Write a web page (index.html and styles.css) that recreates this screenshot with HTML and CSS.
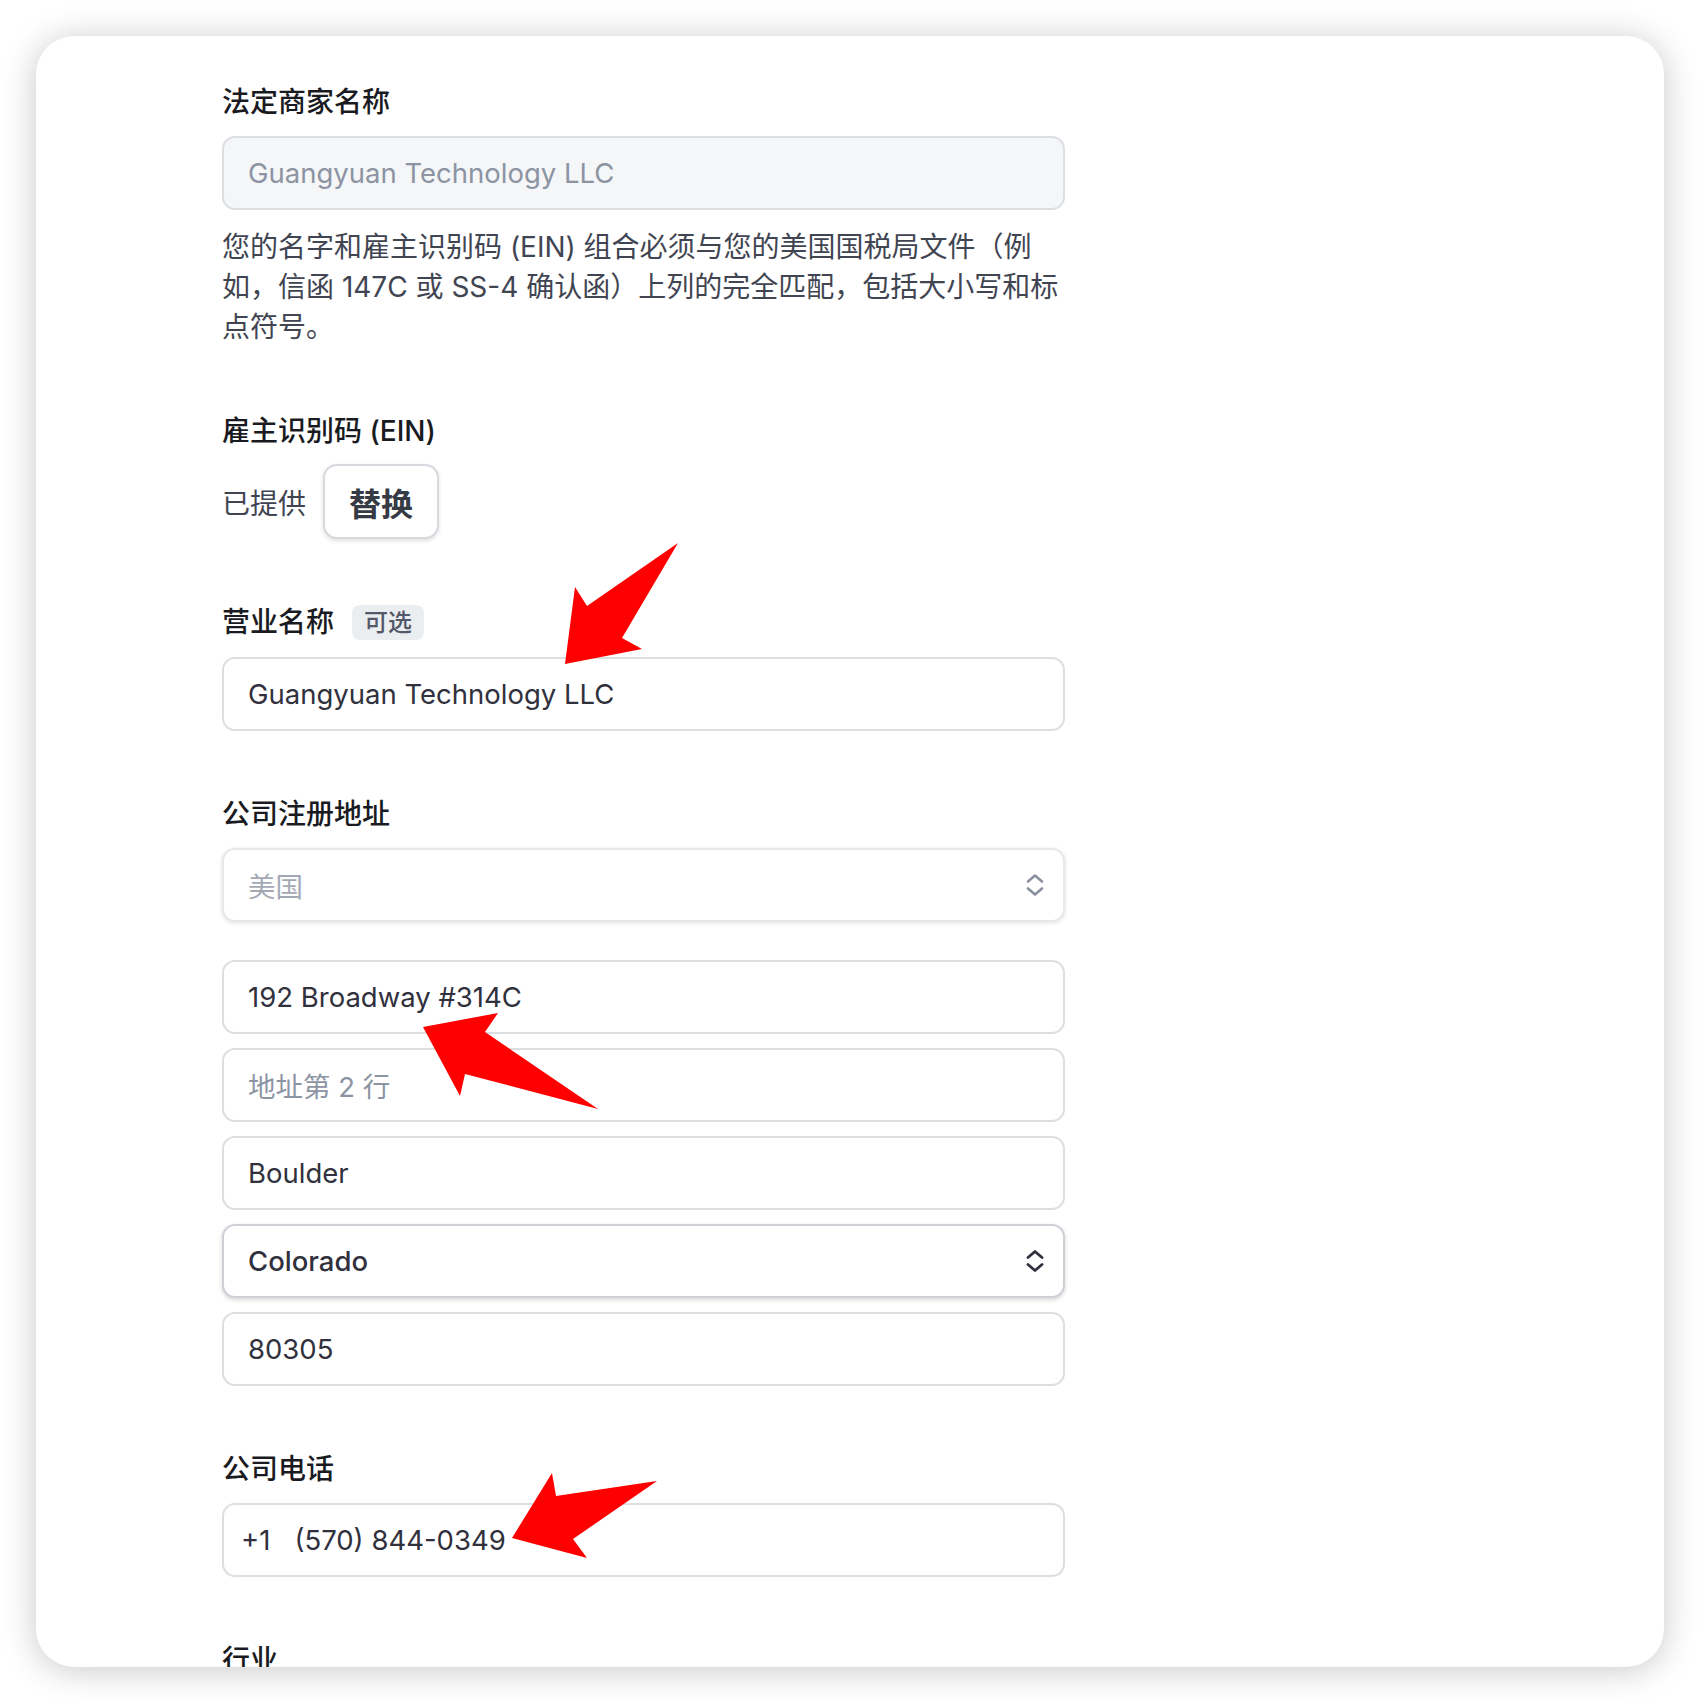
FILE: index.html
```html
<!DOCTYPE html>
<html lang="zh-CN">
<head>
<meta charset="utf-8">
<title>商家信息</title>
<link rel="stylesheet" href="styles.css">
</head>
<body>
<div class="card">
  <div class="form">
    <section class="section">
      <div class="label">法定商家名称</div>
      <div class="input disabled"><span class="placeholder">Guangyuan Technology LLC</span></div>
      <p class="help">您的名字和雇主识别码 (EIN) 组合必须与您的美国国税局文件（例如，信函 147C 或 SS-4 确认函）上列的完全匹配，包括大小写和标点符号。</p>
    </section>

    <section class="section">
      <div class="label label-tight">雇主识别码 (EIN)</div>
      <div class="provided-row">
        <span class="provided">已提供</span>
        <button class="btn" type="button">替换</button>
      </div>
    </section>

    <section class="section">
      <div class="label-row">
        <span class="label">营业名称</span>
        <span class="badge">可选</span>
      </div>
      <div class="input"><span class="value">Guangyuan Technology LLC</span></div>
    </section>

    <section class="section">
      <div class="label">公司注册地址</div>
      <div class="select select-disabled">
        <span class="muted">美国</span>
        <svg class="chev" width="18" height="26" viewBox="0 0 18 26"><path d="M2 9.5 L9 3.5 L16 9.5 M2 16.5 L9 22.5 L16 16.5" fill="none" stroke="#8a919e" stroke-width="2.6" stroke-linecap="round" stroke-linejoin="round"/></svg>
      </div>
      <div class="address">
        <div class="input"><span class="value">192 Broadway #314C</span></div>
        <div class="input"><span class="placeholder">地址第 2 行</span></div>
        <div class="input"><span class="value">Boulder</span></div>
        <div class="select select-active">
          <span class="value strong">Colorado</span>
          <svg class="chev" width="18" height="26" viewBox="0 0 18 26"><path d="M2 9.5 L9 3.5 L16 9.5 M2 16.5 L9 22.5 L16 16.5" fill="none" stroke="#30313d" stroke-width="2.8" stroke-linecap="round" stroke-linejoin="round"/></svg>
        </div>
        <div class="input"><span class="value">80305</span></div>
      </div>
    </section>

    <section class="section">
      <div class="label">公司电话</div>
      <div class="input phone"><span class="value code">+1</span><span class="value">(570) 844-0349</span></div>
    </section>

    <section class="section">
      <div class="label">行业</div>
    </section>
  </div>
</div>

<svg class="arrows" width="1700" height="1704" viewBox="0 0 1700 1704">
  <polygon points="678,543 622,638 642,649 565,664 575,587 587,606" fill="#fe0000"/>
  <polygon points="423,1027 498,1013 485,1032 598,1109 465,1074 460,1096" fill="#fe0000"/>
  <polygon points="512,1538 552,1473 556,1496 657,1481 573,1539 587,1558" fill="#fe0000"/>
</svg>
</body>
</html>
```

FILE: styles.css
```css
html, body {
  margin: 0;
  padding: 0;
  background: #ffffff;
}

body {
  padding: 36px;
  font-family: Inter, "Noto Sans CJK SC", sans-serif;
  color: #30313d;
}

.card {
  width: 1628px;
  height: 1631px;
  box-sizing: border-box;
  background: #ffffff;
  border-radius: 38px;
  box-shadow: 0 3px 34px rgba(0, 0, 0, 0.22);
  overflow: hidden;
  padding: 48px 0 0 186px;
}

.form {
  width: 843px;
  display: flex;
  flex-direction: column;
  gap: 65px;
}

.section {
  display: flex;
  flex-direction: column;
}

.label {
  font-size: 28px;
  line-height: 36px;
  font-weight: 500;
  color: #1a1b22;
  margin-bottom: 16px;
}

.label-tight {
  margin-bottom: 15px;
}

.label-row {
  display: flex;
  align-items: center;
  gap: 18px;
  height: 36px;
  margin-bottom: 17px;
}

.label-row .label {
  margin-bottom: 0;
}

.badge {
  font-size: 24px;
  line-height: 35px;
  height: 35px;
  padding: 0 12px;
  border-radius: 8px;
  background: #ebeef1;
  color: #545969;
  font-weight: 500;
}

.input, .select {
  height: 74px;
  box-sizing: border-box;
  border: 2px solid #dcdee2;
  border-radius: 13px;
  background: #ffffff;
  display: flex;
  align-items: center;
  padding: 0 24px;
  font-size: 27.5px;
}

.input.disabled {
  background: #f5f6f8;
}

.placeholder {
  color: #8c94a3;
}

.value {
  color: #30313d;
}

.strong {
  font-weight: 500;
}

.muted {
  color: #a3a9b4;
}

.help {
  margin: 17px 0 0;
  padding-bottom: 1px;
  font-size: 28px;
  line-height: 40px;
  color: #414552;
}

.provided-row {
  display: flex;
  align-items: center;
  gap: 17px;
}

.provided {
  font-size: 28px;
  color: #414552;
}

.btn {
  height: 75px;
  box-sizing: border-box;
  padding: 0 24px;
  border: 2px solid #d6d9de;
  border-radius: 14px;
  background: #ffffff;
  box-shadow: 0 2px 4px rgba(0, 0, 0, 0.12);
  font-family: Inter, "Noto Sans CJK SC", sans-serif;
  font-size: 32px;
  font-weight: 600;
  color: #353a44;
}

.select {
  justify-content: space-between;
  padding-right: 19px;
}

.select-disabled {
  border-color: #e6e8eb;
  box-shadow: 0 1px 4px rgba(0, 0, 0, 0.12);
}

.select-active {
  border-color: #cdd0d5;
  box-shadow: 0 2px 4px rgba(0, 0, 0, 0.16);
}

.address {
  display: flex;
  flex-direction: column;
  gap: 14px;
  margin-top: 38px;
}

.phone {
  padding-left: 17px;
  gap: 24px;
}

.arrows {
  position: absolute;
  top: 0;
  left: 0;
  pointer-events: none;
}
```
